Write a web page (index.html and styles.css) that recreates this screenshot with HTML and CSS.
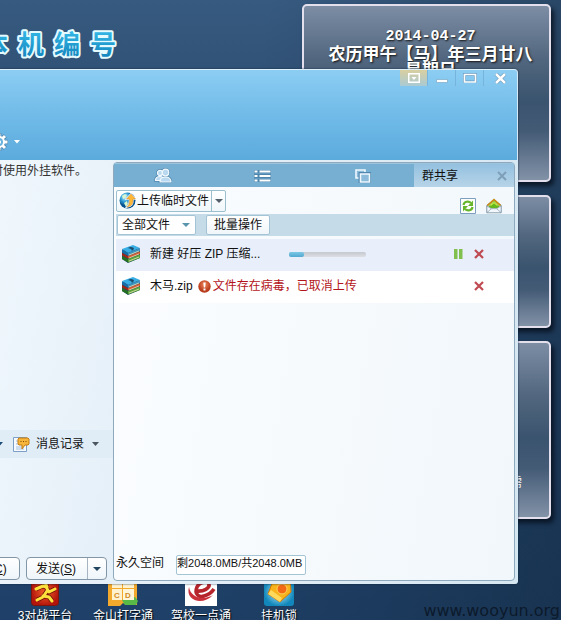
FILE: index.html
```html
<!DOCTYPE html>
<html lang="zh-CN">
<head>
<meta charset="utf-8">
<title>群共享</title>
<link rel="stylesheet" href="styles.css">
</head>
<body>
<main class="desktop">
  <svg class="brand" width="120" height="36" viewBox="0 0 120 36" role="img" aria-label="本机编号">
    <defs>
      <linearGradient id="ink" x1="0" y1="0" x2="0" y2="1"><stop offset="0" stop-color="#3cc4f0"/><stop offset="1" stop-color="#0f7fb8"/></linearGradient>
    </defs>
    <text class="brand-text" x="-18 18 54 90" y="26" fill="url(#ink)">本机编号</text>
  </svg>

  <aside class="widgets">
    <section class="widget widget-date">
      <p class="date">2014-04-27</p>
      <p>农历甲午【马】年三月廿八</p>
      <p>星期日</p>
    </section>
    <section class="widget widget-small"></section>
    <section class="widget widget-note"><p>需</p></section>
  </aside>

  <nav class="shortcuts">
    <a href="#" class="shortcut">
      <svg width="28" height="28" viewBox="0 0 28 28"><defs><radialGradient id="red"><stop offset="0" stop-color="#f4622a"/><stop offset="1" stop-color="#b3150c"/></radialGradient></defs><rect x=".5" y=".5" width="27" height="27" rx="3" fill="url(#red)" stroke="#7d150f"/><path d="M5 11l7-3 3 1 3 5 6-3M16 13l-4 6-6 3M12 18l6 1 3 4M14 4l2 5" fill="none" stroke="#6d1207" stroke-width="4.600" stroke-linejoin="round"/><path d="M5 11l7-3 3 1 3 5 6-3M16 13l-4 6-6 3M12 18l6 1 3 4M14 4l2 5" fill="none" stroke="#ffe23c" stroke-width="3" stroke-linecap="round" stroke-linejoin="round"/></svg>
      <span>3对战平台</span>
    </a>
    <a href="#" class="shortcut">
      <svg width="30" height="28" viewBox="0 0 30 28"><path d="M0 0h29v27H18l-3-2-3 3H0z" fill="#f2a92c"/><path d="M14 22l13-3 3 4-2 4H17z" fill="#58b947"/><rect x="4" y="1" width="10" height="9" fill="#fff3cf"/><rect x="15" y="1" width="11" height="9" fill="#fff3cf"/><rect x="4" y="11" width="10" height="11" fill="#fff3cf"/><rect x="15" y="11" width="11" height="11" fill="#fff6da"/><text class="key" x="6" y="20">C</text><text class="key" x="17" y="20">D</text></svg>
      <span>金山打字通</span>
    </a>
    <a href="#" class="shortcut">
      <svg width="32" height="28" viewBox="0 0 32 28"><path fill="#fff" d="M0 0h32v28H0z"/><path d="M11 13c8 1 14-3 13-7-1-3-9-3-12 3-3 7 2 11 7 9 4-1 8-4 10-7" fill="none" stroke="#b5232b" stroke-width="3.600"/><path d="M4 9c-4 14 14 19 24 8-8 5-22 4-24-8z" fill="#c9303a"/></svg>
      <span>驾校一点通</span>
    </a>
    <a href="#" class="shortcut">
      <svg width="30" height="28" viewBox="0 0 30 28"><defs><radialGradient id="aqua"><stop offset="0" stop-color="#c8f4ff"/><stop offset="1" stop-color="#1187bb"/></radialGradient></defs><rect width="30" height="28" rx="3" fill="url(#aqua)"/><path d="M9 3l17-3 1 14-11 10L4 16z" fill="#f8b31c" stroke="#cf7608"/><path d="M4 16l12 8 2-4L7 12z" fill="#ffd95c"/><circle cx="18" cy="11" r="5" fill="#f26a16" stroke="#ffd35c"/></svg>
      <span>挂机锁</span>
    </a>
  </nav>

  <section class="window">
    <header class="titlebar">
      <div class="caption">
        <button class="cap cap-hot" aria-label="菜单"><svg width="12" height="10" viewBox="0 0 12 10"><path d="M.75.75h10.500v8.500H.75z" fill="none" stroke="#fff" stroke-width="1.500"/><path d="M3.500 4h5L6 7z" fill="#fff"/></svg></button>
        <button class="cap" aria-label="最小化"><svg width="12" height="10" viewBox="0 0 12 10"><path d="M.5 6.500h11v3H.5z" fill="#fff" stroke="#6e9dbd" stroke-width=".6"/></svg></button>
        <button class="cap" aria-label="最大化"><svg width="14" height="10" viewBox="0 0 14 10"><path d="M1.500 1.500h11v7.500h-11z" fill="none" stroke="#6b9cc0" stroke-width="3"/><path d="M1.500 1.500h11v7.500h-11z" fill="none" stroke="#fff" stroke-width="1.700"/></svg></button>
        <button class="cap cap-close" aria-label="关闭"><svg width="13" height="11" viewBox="0 0 13 11"><path d="M2 1l9 9M11 1l-9 9" stroke="#6595b8" stroke-width="3.800"/><path d="M2 1l9 9M11 1l-9 9" stroke="#fff" stroke-width="2.500"/></svg></button>
      </div>
      <button class="settings" aria-label="设置">
        <svg width="18" height="18" viewBox="0 0 18 18"><g stroke="#4d83a8" stroke-width="4.600"><path d="M9 0v18M0 9h18M2.800 2.800l12.400 12.400M15.200 2.800L2.800 15.200"/></g><g stroke="#fff" stroke-width="3"><path d="M9 .5v17M.5 9h17M3 3l12 12M15 3L3 15"/></g><circle cx="9" cy="9" r="6" fill="#fff"/><circle cx="9" cy="9" r="4" fill="#69b2de"/><circle cx="9" cy="9" r="2" fill="#fff"/></svg>
        <svg width="6" height="4" viewBox="0 0 6 4"><path d="M0 0h6L3 3.500z" fill="#fff"/></svg>
      </button>
    </header>

    <div class="content">
      <section class="chat">
        <p class="notice">时使用外挂软件。</p>
        <div class="toolbar">
          <svg class="caret" width="7" height="4" viewBox="0 0 7 4"><path d="M0 0h7L3.500 4z" fill="#1c4d78"/></svg>
          <button class="history">
            <svg width="17" height="17" viewBox="0 0 17 17"><path d="M.5 1.500h13v14H.5z" fill="#f5faff" stroke="#7d9fc6"/><path d="M3 5h3M3 8h4M3 11h8M3 13h8" stroke="#a7c0dc"/><path d="M6 2h9l1 1v5l-1 1h-3l-3 4V9H6L5 8V3z" fill="#f6b63c" stroke="#c57d14"/><path d="M7.500 5.500h1M10 5.500h1M12.500 5.500h1" stroke="#7c4b08" stroke-width="1.200"/></svg>
            <span>消息记录</span>
            <svg width="7" height="4" viewBox="0 0 7 4"><path d="M0 0h7L3.500 4z" fill="#4b5560"/></svg>
          </button>
        </div>
        <div class="actions">
          <button class="btn-close">关闭(<u>C</u>)</button>
          <div class="send">
            <button class="send-main">发送(<u>S</u>)</button>
            <button class="send-more" aria-label="发送选项"><svg width="8" height="4" viewBox="0 0 8 4"><path d="M0 0h8L4 4z" fill="#22455f"/></svg></button>
          </div>
        </div>
      </section>

      <section class="panel">
        <nav class="tabs">
          <button class="tab" aria-label="群成员"><svg width="18" height="15" viewBox="0 0 18 15"><g fill="#b8d9f0" stroke="#4f86ae" stroke-width="2.600"><circle cx="6" cy="5" r="2.600"/><path d="M1.500 12.500c0-3 2-4 4.500-4s4 1 4 4z"/><circle cx="11.500" cy="4.500" r="3.300"/><path d="M6 14c0-3.500 2.500-5 5.500-5s5.500 1.500 5.500 5z"/></g><g fill="#b8d9f0" stroke="#f3faff" stroke-width="1.200"><circle cx="6" cy="5" r="2.600"/><path d="M1.500 12.500c0-3 2-4 4.500-4s4 1 4 4z"/><path d="M6 14c0-3.500 2.500-5 5.500-5s5.500 1.500 5.500 5z"/><circle cx="11.500" cy="4.500" r="3.300"/></g></svg></button>
          <button class="tab" aria-label="列表"><svg width="17" height="12" viewBox="0 0 17 12"><path d="M.5.5h3v2h-3zm0 4.500h3v2h-3zm0 4.500h3v2h-3zM5.500.5h11v2h-11zm0 4.500h11v2h-11zm0 4.500h11v2h-11z" fill="#fff" stroke="#4f86ae" stroke-width="2" paint-order="stroke"/></svg></button>
          <button class="tab" aria-label="相册"><svg width="16" height="14" viewBox="0 0 16 14"><path d="M1 1h9v8H1z" fill="#8cbadb" stroke="#eff8fe" stroke-width="1.600"/><path d="M5 4.500h10V13H5z" fill="#7eaed1" stroke="#5087b0" stroke-width="3"/><path d="M5.500 5h9v8h-9z" fill="#8cbadb" stroke="#eff8fe" stroke-width="1.600"/></svg></button>
          <button class="tab tab-active"><span>群共享</span><svg width="10" height="10" viewBox="0 0 10 10"><path d="M1 1l8 8M9 1L1 9" stroke="#7f9fb9" stroke-width="2"/></svg></button>
        </nav>

        <div class="upload-bar">
          <div class="upload">
            <button class="upload-main">
              <svg width="17" height="17" viewBox="0 0 17 17"><defs><radialGradient id="globe" cx=".35" cy=".3"><stop offset="0" stop-color="#cdf3ff"/><stop offset=".55" stop-color="#319fd8"/><stop offset="1" stop-color="#07518f"/></radialGradient></defs><circle cx="8.500" cy="8.500" r="8" fill="url(#globe)"/><path d="M3 4c2-2 4-2 5-1L6 6 4 7zm2 7l3-2 1 3-2 3z" fill="#d7f6d0"/><path d="M12 2l4.500 5H14c0 5-1 7-6 8 2-2 3-4 2.500-8H7.500z" fill="#ffb938" stroke="#fff" stroke-width="1.600" paint-order="stroke"/><path d="M12 2l4.500 5H14c0 5-1 7-6 8 2-2 3-4 2.500-8H7.500z" fill="none" stroke="#b86e12" stroke-width=".4"/></svg>
              <span>上传临时文件</span>
            </button>
            <button class="upload-more" aria-label="更多上传方式"><svg width="8" height="4" viewBox="0 0 8 4"><path d="M0 0h8L4 4z" fill="#53606c"/></svg></button>
          </div>
          <div class="tools">
            <button aria-label="刷新"><svg width="16" height="16" viewBox="0 0 16 16"><path d="M.5.5h15v15H.5z" fill="#fbfefb" stroke="#7e9fc0"/><path d="M3.500 7c.5-3.500 5-4.500 7.500-2M12.500 9c-.5 3.500-5 4.500-7.500 2" fill="none" stroke="#67b52a" stroke-width="2.200"/><path d="M13 2.500V8H8zM3 13.500V8h5z" fill="#67b52a"/></svg></button>
            <button aria-label="离线文件"><svg width="16" height="16" viewBox="0 0 18 17"><path d="M1 7.500L9 2l8 5.500V16H1z" fill="#fbfdfe" stroke="#7890a8"/><path d="M1.500 8L9 1.500 16.500 8" fill="none" stroke="#c58c16" stroke-width="2"/><path d="M2.500 9L9 3l6.500 6-3 2h-7z" fill="#65b71f"/><path d="M5 8l4-3.500L13 8" fill="none" stroke="#c3e943" stroke-width="1.300"/><path d="M1 8.500l5 3h6l5-3V16H1z" fill="#f2f7fc" stroke="#8598ab" stroke-width=".8"/><path d="M1 16l5-4.500M17 16l-5-4.500" stroke="#8598ab" stroke-width=".8"/></svg></button>
          </div>
        </div>

        <div class="filter-bar">
          <label class="filter">
            <select aria-label="文件类型"><option>全部文件</option></select>
            <svg width="8" height="4" viewBox="0 0 8 4"><path d="M0 0h8L4 4z" fill="#5a95ae"/></svg>
          </label>
          <button class="batch">批量操作</button>
        </div>

        <ul class="files">
          <li class="file file-selected">
            <svg class="zip" width="20" height="20" viewBox="0 0 20 20"><path d="M1 7l12-5 6 3v9L7 19l-6-4z" fill="#244a66"/><path d="M1 5l11-4 7 3L7 9z" fill="#38aee5"/><path d="M1 5l6 4v3L1 8.500z" fill="#176da5"/><path d="M7 9l12-5v3L7 12z" fill="#3c92c0"/><path d="M1 9l6 3v2.500L1 11.500z" fill="#9f2618"/><path d="M7 12l12-4.500V10L7 14.500z" fill="#d45b33"/><path d="M1 12l6 3v3.500L1 15z" fill="#246f22"/><path d="M7 15l12-4.500V14L7 18.500z" fill="#57a33c"/><path d="M8 11l10-4M8 14l10-4M8 17l10-4" stroke="#eee4b4" stroke-width=".8"/><path d="M7 4c2-2 6-1 6 1l-2 2-1-2z" fill="#1d4c6c"/></svg>
            <span class="name">新建 好压 ZIP 压缩...</span>
            <progress class="progress" max="100" value="20" aria-label="上传进度"></progress>
            <span class="controls">
              <button aria-label="暂停"><svg width="9" height="10" viewBox="0 0 9 10"><path d="M0 0h3.500v10H0zM5 0h3.500v10H5z" fill="#81bf4e"/></svg></button>
              <button aria-label="取消"><svg width="10" height="10" viewBox="0 0 10 10"><path d="M1 1l8 8M9 1L1 9" stroke="#bf4a51" stroke-width="2.200"/></svg></button>
            </span>
          </li>
          <li class="file">
            <svg class="zip" width="20" height="20" viewBox="0 0 20 20"><path d="M1 7l12-5 6 3v9L7 19l-6-4z" fill="#244a66"/><path d="M1 5l11-4 7 3L7 9z" fill="#38aee5"/><path d="M1 5l6 4v3L1 8.500z" fill="#176da5"/><path d="M7 9l12-5v3L7 12z" fill="#3c92c0"/><path d="M1 9l6 3v2.500L1 11.500z" fill="#9f2618"/><path d="M7 12l12-4.500V10L7 14.500z" fill="#d45b33"/><path d="M1 12l6 3v3.500L1 15z" fill="#246f22"/><path d="M7 15l12-4.500V14L7 18.500z" fill="#57a33c"/><path d="M8 11l10-4M8 14l10-4M8 17l10-4" stroke="#eee4b4" stroke-width=".8"/><path d="M7 4c2-2 6-1 6 1l-2 2-1-2z" fill="#1d4c6c"/></svg>
            <span class="name">木马.zip</span>
            <span class="warning"><svg width="13" height="13" viewBox="0 0 13 13"><defs><radialGradient id="alert" cy=".35"><stop offset="0" stop-color="#f0895c"/><stop offset="1" stop-color="#b93c1c"/></radialGradient></defs><circle cx="6.500" cy="6.500" r="6.200" fill="url(#alert)"/><path d="M5.300 2.500h2.400l-.5 5H5.800zM5.500 8.600h2v2h-2z" fill="#fff"/></svg>文件存在病毒，已取消上传</span>
            <span class="controls">
              <button aria-label="取消"><svg width="10" height="10" viewBox="0 0 10 10"><path d="M1 1l8 8M9 1L1 9" stroke="#bf4a51" stroke-width="2.200"/></svg></button>
            </span>
          </li>
        </ul>

        <footer class="storage">
          <span>永久空间</span>
          <span class="quota">剩2048.0MB/共2048.0MB</span>
        </footer>
      </section>
    </div>
  </section>

  <p class="watermark">www.wooyun.org</p>
</main>
</body>
</html>
```

FILE: styles.css
```css
* { box-sizing: border-box; }

body {
  margin: 0;
  font: 12px/16px "Liberation Sans", "Noto Sans CJK SC", sans-serif;
  color: #111;
}

p, ul { margin: 0; padding: 0; }

svg { display: block; flex: none; }

button {
  display: flex;
  align-items: center;
  padding: 0;
  border: 0;
  background: none;
  font: inherit;
  color: inherit;
  white-space: nowrap;
}

.desktop {
  position: relative;
  height: 100vh;
  overflow: hidden;
  background: linear-gradient(100deg, transparent 40%, rgba(18, 38, 58, .5)), linear-gradient(#375a80, #305175 14%, #26486f 45%, #1f4169);
}

.brand { position: absolute; left: 0; top: 28px; }

.brand-text {
  font: 700 26px "Noto Sans CJK SC", sans-serif;
  stroke: #e6fbff;
  stroke-width: 4px;
  stroke-linejoin: round;
  paint-order: stroke;
}

/* desktop gadgets */
.widgets {
  position: absolute;
  top: 4px;
  right: 10px;
  width: 249px;
  display: flex;
  flex-direction: column;
  gap: 13px;
}

.widget {
  border: 2px solid #e4dfec;
  border-radius: 5px;
  background: linear-gradient(#7c8da4, #52677f 30%, #3a536e 55%, #445b76 72%, #8292a7);
  box-shadow: 3px 4px 5px rgba(5, 12, 25, .8);
  color: #fff;
}

.widget-date {
  height: 178px;
  padding: 23px 0 0 8px;
  font: 700 17px/16px "Noto Sans CJK SC", sans-serif;
  text-align: center;
  text-shadow: 1px 1px 2px #111;
  white-space: nowrap;
}

.date { font: 700 15px/16px "Liberation Mono", monospace; }

.widget-small { height: 133px; }

.widget-note {
  height: 178px;
  display: flex;
  flex-direction: column;
  justify-content: flex-end;
  padding: 0 27px 26px;
  text-align: right;
}

/* desktop shortcuts */
.shortcuts {
  position: absolute;
  left: 6px;
  top: 578px;
  display: flex;
}

.shortcut {
  width: 78px;
  display: flex;
  flex-direction: column;
  align-items: center;
  gap: 2px;
  color: #fff;
  text-decoration: none;
  text-shadow: 1px 1px 1px #000;
}

.key { font: 700 8px "Liberation Sans", sans-serif; fill: #d28a1c; text-shadow: none; }

/* main window */
.window {
  position: absolute;
  inset: 69px 43px 36px 0;
  display: flex;
  flex-direction: column;
  overflow: hidden;
  border-top: 1px solid #dcf0fb;
  border-right: 1px solid #d5eaf6;
  border-radius: 0 4px 3px 0;
  background: linear-gradient(100deg, #f0f8fd, #e6f0f8 30%, #d6e7f2);
  box-shadow: 0 0 2px #102338;
}

.titlebar {
  flex: none;
  height: 90px;
  display: flex;
  flex-direction: column;
  align-items: flex-start;
  justify-content: space-between;
  padding-bottom: 9px;
  background: linear-gradient(#8ccdf3, #6eb9e7 55%, #5cabdd);
}

.caption { align-self: flex-end; display: flex; }

.cap {
  width: 28px;
  height: 16px;
  justify-content: center;
  border-right: 1px solid #75b4dc;
}

.cap-hot { background: linear-gradient(#d9cfa0, #a9cad4); }
.cap-close { width: 33px; border: 0; }

.settings { gap: 6px; margin-left: -10px; }

.content {
  flex: 1;
  min-height: 0;
  display: grid;
  grid-template-columns: 113px minmax(0, 1fr);
}

.chat {
  display: flex;
  flex-direction: column;
  overflow: hidden;
}

.notice {
  flex: 1;
  margin-left: -9px;
  padding-top: 3px;
  color: #333;
  white-space: nowrap;
}

.toolbar {
  height: 28px;
  display: flex;
  align-items: center;
  gap: 10px;
  margin-left: -4px;
  background: #e1edf6;
}

.history { gap: 6px; }
.history svg:last-child { margin-left: 2px; }

.actions {
  display: flex;
  align-items: center;
  gap: 6px;
  padding: 99px 6px 4px 0;
}

.btn-close, .send {
  height: 23px;
  border: 1px solid #8396a5;
  border-radius: 4px;
  background: linear-gradient(#fff, #eef5fa);
}

.btn-close { margin-left: -46px; width: 66px; padding-left: 11px; }
.send { flex: 1; display: flex; }
.send-main { flex: 1; padding-left: 9px; }
.send-more { width: 19px; justify-content: center; border-left: 1px solid #a5b4c0; }

/* file sharing panel */
.panel {
  display: flex;
  flex-direction: column;
  min-width: 0;
  margin: 2px 2px 3px 0;
  border: 1px solid #8da9bb;
  border-radius: 4px;
  background: linear-gradient(100deg, #fbfdff, #f1f7fb);
}

.tabs {
  flex: none;
  height: 24px;
  display: grid;
  grid-template-columns: repeat(4, 1fr);
  border-top: 1px solid #9ec4dd;
  background: #77afd3;
}

.tab { justify-content: center; padding-right: 3px; }

.tab-active {
  justify-content: space-between;
  padding: 0 7px 0 8px;
  background: linear-gradient(#94c1e0, #b7d4e8);
}

.upload-bar {
  flex: none;
  height: 27px;
  display: flex;
  align-items: center;
  justify-content: space-between;
  padding: 0 12px 0 2px;
}

.upload {
  height: 22px;
  display: flex;
  border: 1px solid #9bbfce;
  border-radius: 2px;
  background: linear-gradient(#fff, #f0f7fa);
}

.upload-main { width: 94px; padding-left: 2px; gap: 1px; }
.upload-more { width: 14px; justify-content: center; border-left: 1px solid #9bbfce; }

.tools { align-self: flex-end; display: flex; gap: 10px; }

.filter-bar {
  flex: none;
  height: 22px;
  display: flex;
  align-items: center;
  gap: 10px;
  margin-left: 2px;
  padding-left: 1px;
  background: #c5dce8;
}

.filter { display: flex; align-items: center; }

.filter select {
  appearance: none;
  width: 79px;
  height: 20px;
  padding: 0 4px;
  border: 1px solid #a3c4d4;
  border-radius: 2px;
  background: #fff;
  font: inherit;
  color: inherit;
}

.filter svg { margin-left: -14px; margin-right: 6px; }

.batch {
  height: 20px;
  padding: 0 7px;
  border: 1px solid #a3c4d4;
  border-radius: 2px;
  background: linear-gradient(#fff, #f0f6fa);
}

.files {
  flex: 1;
  margin: 3px 0 0 2px;
  list-style: none;
}

.file {
  height: 32px;
  display: flex;
  align-items: center;
  gap: 9px;
  padding: 0 30px 2px 5px;
  background: #fff;
  white-space: nowrap;
}

.file-selected { background: #e8effa; }
.file-selected .name { width: 130px; }

.progress {
  appearance: none;
  width: 77px;
  height: 5px;
  border: 0;
}

.progress::-webkit-progress-bar { background: linear-gradient(#c4c9cf, #dddfe3); border-radius: 2px; }
.progress::-webkit-progress-value { background: linear-gradient(#7cc8e6, #52a9d0); border-radius: 2px; }

.warning {
  display: flex;
  align-items: center;
  gap: 2px;
  margin-left: -4px;
  color: #b3141a;
}

.controls { margin-left: auto; display: flex; gap: 11px; }

.storage {
  flex: none;
  display: flex;
  gap: 12px;
  padding: 0 0 5px 2px;
}

.quota {
  width: 130px;
  height: 20px;
  border: 1px solid #a3c4d4;
  border-radius: 2px;
  background: #fff;
  font-size: 11px;
  line-height: 14px;
  white-space: nowrap;
}

.watermark {
  position: absolute;
  right: 1px;
  bottom: 0;
  font: 16px/18px "DejaVu Sans", sans-serif;
  color: #0c1a2b;
}
```
